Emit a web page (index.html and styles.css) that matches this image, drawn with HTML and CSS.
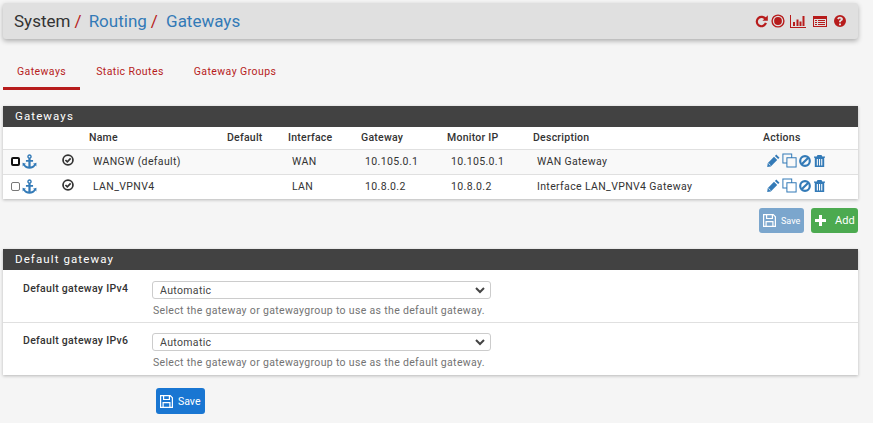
FILE: index.html
```html
<!DOCTYPE html>
<html>
<head>
  <meta charset="utf-8">
  <title>System / Routing / Gateways</title>
  <link rel="stylesheet" href="styles.css">
</head>
<body>
  <svg class="defs" width="0" height="0">
    <symbol id="i-anchor" viewBox="0 0 16 16">
      <path d="M8 .3a2.400 2.400 0 0 0-1.200 4.500v1.500H4.200v2h2.600v5c-1.600-.2-3-1-3.700-2l1.200-1-3.700-1.100.1 4 1-.9C2.900 14.500 5.300 15.800 8 15.800s5.100-1.300 6.300-3.500l1 .9.100-4-3.700 1.100 1.200 1c-.7 1-2.100 1.800-3.700 2v-5h2.600v-2H9.200V4.800A2.400 2.400 0 0 0 8 .3zm0 1.500a.9.9 0 1 1 0 1.800.9.9 0 0 1 0-1.800z" fill-rule="evenodd"/>
    </symbol>
    <symbol id="i-check" viewBox="0 0 14 14">
      <circle cx="7" cy="7" r="5.800" fill="none" stroke="currentColor" stroke-width="2"/>
      <path d="M4 7l2.200 2.200 3.900-4" fill="none" stroke="currentColor" stroke-width="2"/>
    </symbol>
    <symbol id="i-pencil" viewBox="0 0 13 13">
      <path d="M9.300.5l3.200 3.200-1.400 1.400-3.200-3.200zM7 2.800l3.200 3.200-6.400 6.400-3.600.6.500-3.700zM1.400 9.800l1.800 1.800.7-.2-2.300-2.300z"/>
    </symbol>
    <symbol id="i-copy" viewBox="0 0 15 15">
      <path d="M.4.400h9.800v3.800h4.400v10.400H4.400v-4H.4zM1.400 1.400v8.200h3V4.200h4.800V1.400zM5.400 5.200v8.400h8.200V5.200z" fill-rule="evenodd"/>
    </symbol>
    <symbol id="i-ban" viewBox="0 0 12 12">
      <circle cx="6" cy="6" r="4.800" fill="none" stroke="currentColor" stroke-width="2.200"/>
      <path d="M2.700 9.300l6.600-6.600" fill="none" stroke="currentColor" stroke-width="2.200"/>
    </symbol>
    <symbol id="i-trash" viewBox="0 0 11 12">
      <path d="M3.500 0h4l.8 1.500H11v1.300h-.8V12H.8V2.800H0V1.500h2.700zM2.800 4v6.400h1.100V4zM5 4v6.400h1.100V4zM7.200 4v6.400h1.100V4z" fill-rule="evenodd"/>
    </symbol>
    <symbol id="i-save" viewBox="0 0 13 13">
      <path d="M0 0h10.500L13 2.500V13H0zM1.200 1.200v10.600h1.300V7h8v4.800h1.300V3L10 1.200v3.900H3V1.200zM4.200 1.200v2.700h4.600V1.200zM3.700 8.200v3.600h5.600V8.200z" fill-rule="evenodd"/>
    </symbol>
  </svg>

  <header class="page-head">
    <h1 class="crumbs">
      <span>System</span><span class="sep">/</span>
      <a href="#">Routing</a><span class="sep">/</span>
      <a href="#" class="last">Gateways</a>
    </h1>
    <div class="head-icons">
      <svg width="13" height="13" viewBox="0 0 14 14"><path d="M7 .8a6.200 6.200 0 1 0 5.900 8.100l-2.300-.7A3.800 3.800 0 1 1 9.700 4.500L8 6.200h5.800V.4l-2.100 2.100A6.200 6.200 0 0 0 7 .8z"/></svg>
      <svg width="14" height="14" viewBox="0 0 14 14"><circle cx="7" cy="7" r="5.900" fill="none" stroke="currentColor" stroke-width="1.400"/><circle cx="7" cy="7" r="3.900"/></svg>
      <svg class="gap-sm" width="16" height="13" viewBox="0 0 16 13"><path d="M0 0h1v12h15v1H0zM3 7h2v4H3zM6.500 4.500h2V11h-2zM9.500 6.500h2V11h-2zM12.500 1h2v10h-2z"/></svg>
      <svg class="gap" width="14" height="11" viewBox="0 0 14 11"><path d="M0 0h14v11H0zM1 3v7h12V3zM2 4h2v1H2zM5 4h7v1H5zM2 6h2v1H2zM5 6h7v1H5zM2 8h2v1H2zM5 8h7v1H5z" fill-rule="evenodd"/></svg>
      <svg class="gap" width="12" height="12" viewBox="0 0 12 12"><path fill-rule="evenodd" d="M6 0a6 6 0 1 1 0 12A6 6 0 0 1 6 0zM5 8.500v1.700h2V8.500zM6 1.800c-1.500 0-2.500.8-2.800 2l1.500.6c.2-.6.600-1 1.200-1 .6 0 1 .3 1 .7 0 .5-.4.700-.9 1-.6.400-1 .8-1 1.600v.5h2v-.4c0-.3.200-.4.600-.7.700-.4 1.300-1 1.300-2 0-1.400-1.300-2.300-2.900-2.300z"/></svg>
    </div>
  </header>

  <nav class="tabs">
    <a href="#" class="tab active">Gateways</a>
    <a href="#" class="tab">Static Routes</a>
    <a href="#" class="tab">Gateway Groups</a>
  </nav>

  <section class="panel">
    <h2 class="panel-title">Gateways</h2>
    <table class="gw-table">
      <colgroup>
        <col class="c-sel"><col class="c-state"><col class="c-name"><col class="c-def"><col class="c-if">
        <col class="c-gw"><col class="c-mon"><col class="c-desc"><col class="c-act">
      </colgroup>
      <thead>
        <tr>
          <th></th><th></th><th>Name</th><th>Default</th><th>Interface</th>
          <th>Gateway</th><th>Monitor IP</th><th>Description</th><th>Actions</th>
        </tr>
      </thead>
      <tbody>
        <tr class="odd">
          <td class="sel"><span class="box focus"></span><svg class="blue anchor"><use href="#i-anchor"/></svg></td>
          <td class="state"><svg class="dark"><use href="#i-check"/></svg></td>
          <td>WANGW (default)</td><td></td><td>WAN</td><td>10.105.0.1</td><td>10.105.0.1</td><td>WAN Gateway</td>
          <td class="acts">
            <svg class="blue a-pencil"><use href="#i-pencil"/></svg><svg class="blue a-copy"><use href="#i-copy"/></svg><svg class="blue a-ban"><use href="#i-ban"/></svg><svg class="blue a-trash"><use href="#i-trash"/></svg>
          </td>
        </tr>
        <tr>
          <td class="sel"><span class="box"></span><svg class="blue anchor"><use href="#i-anchor"/></svg></td>
          <td class="state"><svg class="dark"><use href="#i-check"/></svg></td>
          <td>LAN_VPNV4</td><td></td><td>LAN</td><td>10.8.0.2</td><td>10.8.0.2</td><td>Interface LAN_VPNV4 Gateway</td>
          <td class="acts">
            <svg class="blue a-pencil"><use href="#i-pencil"/></svg><svg class="blue a-copy"><use href="#i-copy"/></svg><svg class="blue a-ban"><use href="#i-ban"/></svg><svg class="blue a-trash"><use href="#i-trash"/></svg>
          </td>
        </tr>
      </tbody>
    </table>
  </section>

  <div class="table-btns">
    <button class="btn btn-faded"><svg class="ico-save"><use href="#i-save"/></svg>Save</button>
    <button class="btn btn-add"><span class="plus"></span>Add</button>
  </div>

  <section class="panel">
    <h2 class="panel-title">Default gateway</h2>
    <div class="form-row">
      <label class="form-label">Default gateway IPv4</label>
      <div class="form-field">
        <div class="select">Automatic<svg width="10" height="7" viewBox="0 0 10 7"><path d="M1 1l4 4 4-4" fill="none" stroke="#444" stroke-width="2"/></svg></div>
        <p class="help">Select the gateway or gatewaygroup to use as the default gateway.</p>
      </div>
    </div>
    <div class="form-row">
      <label class="form-label">Default gateway IPv6</label>
      <div class="form-field">
        <div class="select">Automatic<svg width="10" height="7" viewBox="0 0 10 7"><path d="M1 1l4 4 4-4" fill="none" stroke="#444" stroke-width="2"/></svg></div>
        <p class="help">Select the gateway or gatewaygroup to use as the default gateway.</p>
      </div>
    </div>
  </section>

  <div class="form-btns">
    <button class="btn btn-primary"><svg class="ico-save"><use href="#i-save"/></svg>Save</button>
  </div>
</body>
</html>
```

FILE: styles.css
```css
* {
  box-sizing: border-box;
}

html, body {
  height: 100%;
}

body {
  margin: 0;
  padding: 3px 15px 0 3px;
  background: #f5f5f5;
  color: #333;
  font-family: Roboto, "Liberation Sans", sans-serif;
  font-size: 10.500px;
  overflow: hidden;
}

a {
  text-decoration: none;
}

.defs {
  position: absolute;
}

.page-head {
  height: 36px;
  display: flex;
  align-items: center;
  justify-content: space-between;
  padding: 0 12px 0 11px;
  background: #e0e0e0;
  border-radius: 3px;
  box-shadow: 0 2px 5px rgba(0, 0, 0, .3);
}

.crumbs {
  margin: 0;
  font-size: 17px;
  font-weight: 400;
  color: #333;
  white-space: nowrap;
}

.crumbs a {
  color: #337ab7;
}

.crumbs .sep {
  color: #b71c1c;
  margin: 0 3px 0 4px;
}

.crumbs .last {
  margin-left: 1px;
}

.head-icons {
  display: flex;
  align-items: center;
  gap: 3px;
  color: #b71c1c;
}

.head-icons svg {
  fill: currentColor;
  display: block;
}

.head-icons .gap {
  margin-left: 4px;
}

.head-icons .gap-sm {
  margin-left: 2px;
}

.tabs {
  display: flex;
  margin-top: 15px;
  height: 36px;
}

.tab {
  padding: 11px 14px 0;
  color: #b71c1c;
  letter-spacing: .42px;
  border-bottom: 3px solid transparent;
}

.tab + .tab {
  margin-left: 2px;
}

.tab.active {
  border-bottom-color: #b71c1c;
}

.panel {
  margin-top: 16px;
  background: #fff;
  box-shadow: 0 1px 3px rgba(0, 0, 0, .25);
}

.panel-title {
  margin: 0;
  height: 21px;
  padding: 0 12px;
  line-height: 21px;
  background: #424242;
  color: #fff;
  font-size: 11.500px;
  font-weight: 400;
  letter-spacing: 1.1px;
}

.gw-table {
  width: 100%;
  border-collapse: collapse;
  table-layout: fixed;
}

.c-sel { width: 50px; }
.c-state { width: 32px; }
.c-name { width: 138px; }
.c-def { width: 61px; }
.c-if { width: 73px; }
.c-gw { width: 86px; }
.c-mon { width: 86px; }
.c-desc { width: 230px; }

.gw-table th {
  height: 22px;
  padding: 0 0 0 4px;
  text-align: left;
  font-weight: 500;
  color: #333;
  letter-spacing: .25px;
}

.gw-table td {
  height: 25px;
  padding: 0 0 0 8px;
  border-top: 1px solid #e0e0e0;
  color: #333;
  white-space: nowrap;
  letter-spacing: .36px;
}

.gw-table .odd td {
  background: #f9f9f9;
}

.gw-table td.sel {
  padding-left: 8px;
}

.gw-table td.state {
  padding-left: 9px;
}

.gw-table td.acts {
  padding-left: 8px;
}

.gw-table svg {
  fill: currentColor;
  vertical-align: middle;
}

.gw-table .acts svg {
  margin-bottom: 2px;
}

.blue {
  color: #337ab7;
}

.dark {
  color: #333;
  width: 12px;
  height: 12px;
  display: block;
  margin: -3px 0 0 0;
}

.box {
  display: inline-block;
  width: 9px;
  height: 9px;
  border: 1px solid #777;
  border-radius: 2px;
  background: #fff;
  vertical-align: middle;
}

.box.focus {
  border: 2px solid #111;
}

.anchor {
  width: 15px;
  height: 15px;
  margin-left: 2px;
}

.a-pencil {
  width: 13px;
  height: 13px;
}

.a-copy {
  width: 15px;
  height: 15px;
  margin-left: 2px;
}

.a-ban {
  width: 12px;
  height: 12px;
  margin-left: 2px;
}

.a-trash {
  width: 11px;
  height: 12px;
  margin-left: 3px;
}

.table-btns {
  display: flex;
  justify-content: flex-end;
  gap: 7px;
  margin-top: 9px;
}

.btn {
  display: inline-flex;
  align-items: center;
  border: 0;
  border-radius: 3px;
  color: #fff;
  font-family: inherit;
  font-size: 10.500px;
  padding: 0;
}

.ico-save {
  width: 13px;
  height: 13px;
  fill: #fff;
}

.btn-faded {
  width: 45px;
  height: 25px;
  padding-left: 4px;
  gap: 5px;
  background: #7ba6cd;
  font-size: 9px;
}

.btn-add {
  width: 47px;
  height: 25px;
  padding-left: 4px;
  gap: 9px;
  background: #4caa50;
  font-size: 11px;
}

.plus {
  width: 11px;
  height: 11px;
  background:
    linear-gradient(#fff, #fff) center / 11px 3px no-repeat,
    linear-gradient(#fff, #fff) center / 3px 11px no-repeat;
}

.form-row {
  display: flex;
  height: 53px;
  border-top: 1px solid #e0e0e0;
}

.panel-title + .form-row {
  height: 52px;
  border-top: 0;
}

.form-label {
  width: 149px;
  padding: 11px 0 0 20px;
  font-weight: 500;
  font-size: 10.500px;
  color: #333;
  letter-spacing: .3px;
}

.form-field {
  width: 339px;
  padding-top: 10px;
}

.panel-title + .form-row .form-label {
  padding-top: 12px;
}

.panel-title + .form-row .form-field {
  padding-top: 11px;
}

.select {
  display: flex;
  align-items: center;
  justify-content: space-between;
  height: 18px;
  padding: 0 5px 0 7px;
  background: #fff;
  border: 1px solid #ccc;
  border-radius: 3px;
  color: #444;
  letter-spacing: .35px;
}

.help {
  margin: 5px 0 0;
  padding-left: 1px;
  color: #737373;
  letter-spacing: .33px;
  white-space: nowrap;
}

.form-btns {
  margin-top: 13px;
  padding-left: 153px;
}

.btn-primary {
  width: 49px;
  height: 26px;
  padding-left: 4px;
  gap: 5px;
  background: #1976d2;
}
```
